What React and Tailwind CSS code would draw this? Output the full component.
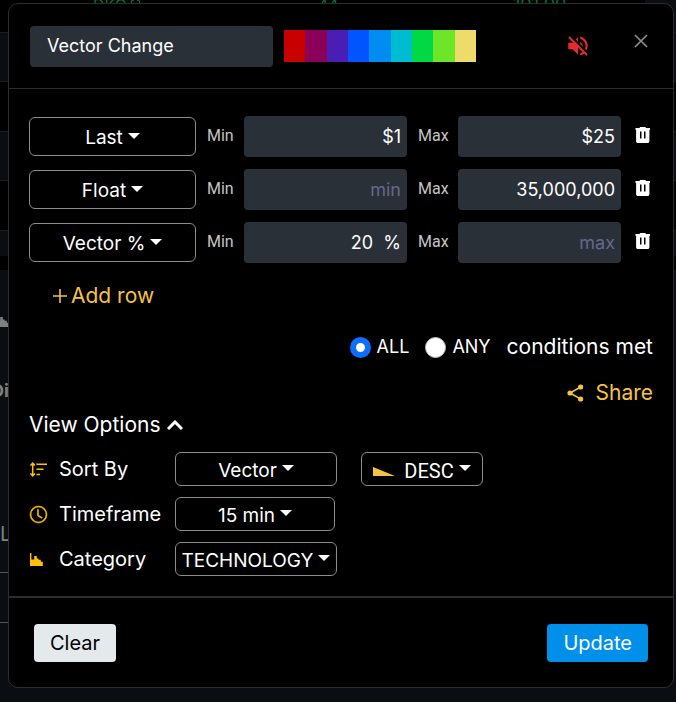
import React, { useState } from 'react';
import { BsClock } from 'react-icons/bs';
import { MdVolumeOff } from 'react-icons/md';

const swatches = [
    'bg-[#c80000]', 'bg-[#8b0058]', 'bg-[#4a1eb4]', 'bg-[#0055ff]', 'bg-[#008cf0]',
    'bg-[#00bcd0]', 'bg-[#00d943]', 'bg-[#6ee628]', 'bg-[#eedc6a]',
];

const initialRows = [
    { field: 'Last', min: '$1', max: '$25' },
    { field: 'Float', min: '', max: '35,000,000' },
    { field: 'Vector %', min: '20  %', max: '' },
];

const Caret = () => (
    <svg className="mb-[6px] h-[6px] w-[12px] shrink-0 pointer-events-none" viewBox="0 0 12 6" fill="currentColor">
        <path d="M0 0h12L6 6z" />
    </svg>
);

const TrashIcon = () => (
    <svg className="h-4 w-4" viewBox="0 0 16 16" fill="currentColor" fillRule="evenodd">
        <path d="M5.2 0h5.1l.8 1H15v2h-.6v11.2c0 1-.8 1.8-1.8 1.8H2.9c-1 0-1.8-.8-1.8-1.8V3H.5V1h3.9zM5 4.6v7h1.5v-7zm4 0v7h1.5v-7z" />
    </svg>
);

const ShareIcon = () => (
    <svg className="h-[18px] w-[17px]" viewBox="0 0 17 18" fill="currentColor">
        <path d="M13.6 3 3 9l10.6 6" fill="none" stroke="currentColor" strokeWidth="1.5" />
        <circle cx="13.6" cy="3" r="2.6" />
        <circle cx="3" cy="9" r="2.6" />
        <circle cx="13.6" cy="15" r="2.6" />
    </svg>
);

const SortIcon = () => (
    <svg className="h-[15px] w-[17px]" viewBox="0 0 17 15" fill="none" stroke="currentColor" strokeWidth="1.5">
        <path d="M2.7 2v11M.5 3.6l2.2-2.4 2.2 2.4M.5 11.4l2.2 2.4 2.2-2.4M6.5 2.2H17M6.5 7.3h7M6.5 12.4h3.6" />
    </svg>
);

const StepChartIcon = ({ className }) => (
    <svg className={className} viewBox="0 0 13 13" fill="currentColor">
        <path d="M0 0h1.4v6.6h2.8V3h2.6v2.4h1.8v1.4h2.2v2h2V13H0z" />
    </svg>
);

const Dropdown = ({ label, options, className, icon }) => (
    <label className={`flex items-center justify-center gap-[5px] rounded-md border border-[#8c8c8c] text-white ${className}`}>
        {icon}
        <select aria-label={label} className="appearance-none field-sizing-content bg-transparent outline-none">
            {options.map(o => <option key={o} className="bg-black">{o}</option>)}
        </select>
        <Caret />
    </label>
);

const ConditionRow = ({ row, index, onChange, onRemove }) => {
    const inputClass = 'h-[41px] w-full min-w-0 rounded bg-[#2a3038] px-[6px] text-right text-lg text-white outline-none placeholder:text-[#67678c]';
    const labelClass = 'pb-[2px] pl-[11px] font-[Roboto,sans-serif] text-base text-[#c4c4c4]';
    return (
        <div className="grid grid-cols-[167px_48px_1fr_51px_1fr_32px] items-center">
            <Dropdown
                label="Field"
                options={[row.field, ...['Last', 'Float', 'Vector %'].filter(f => f !== row.field)]}
                className="h-[39px] pt-1 text-[19px]"
            />
            <label htmlFor={`min-${index}`} className={labelClass}>Min</label>
            <input id={`min-${index}`} className={inputClass} placeholder="min" value={row.min} onChange={e => onChange(index, 'min', e.target.value)} />
            <label htmlFor={`max-${index}`} className={labelClass}>Max</label>
            <input id={`max-${index}`} className={inputClass} placeholder="max" value={row.max} onChange={e => onChange(index, 'max', e.target.value)} />
            <button type="button" aria-label="Remove row" className="flex justify-end pr-[2px] pb-[3px] text-white" onClick={() => onRemove(index)}>
                <TrashIcon />
            </button>
        </div>
    );
};

// Dimmed scanner table behind the dialog
const Backdrop = () => (
    <div className="absolute inset-0 overflow-hidden bg-[#0a0e13]" aria-hidden="true">
        <div className="mr-[31px] h-8 bg-black" />
        <div className="h-[50px] border-y border-[#1a1d20]" />
        <div className="h-[49px] bg-black" />
        <div className="h-[50px] border-y border-[#1a1d20]" />
        <div className="h-[49px] bg-black" />
        <div className="h-[26px] border-t border-[#1a1d20]" />
        <div className="h-[14px] bg-black" />
        <div className="absolute -top-[3px] left-[93px] flex gap-1 text-base leading-4 text-[#00702d]">
            DKG
            <svg className="mt-[3px] h-[10px] w-[9px]" viewBox="0 0 9 10" fill="none" stroke="currentColor">
                <path d="M3 .5H.5V10M6 .5h2.500V10" />
            </svg>
        </div>
        <div className="absolute -top-[3px] left-[318px] text-base leading-4 text-[#00702d]">44</div>
        <div className="absolute -top-[3px] left-[513px] text-lg leading-4 text-[#00702d]">101.00</div>
        <StepChartIcon className="absolute top-[314px] -left-[4px] h-[13px] w-[13px] text-[#808080]" />
        <div className="absolute top-[381px] -left-[9px] text-lg leading-5 font-bold text-[#808080]">Di</div>
        <div className="absolute top-[524px] left-0 text-xl leading-5 text-[#808080]">L</div>
        <div className="absolute top-[572px] left-0 h-[51px] w-4 border-y border-[#555]" />
    </div>
);

const App = () => {
    const [rows, setRows] = useState(initialRows);
    const [name, setName] = useState('Vector Change');
    const [open, setOpen] = useState(true);

    const changeRow = (i, key, value) => setRows(rows.map((r, n) => (n === i ? { ...r, [key]: value } : r)));
    const removeRow = (i) => setRows(rows.filter((_, n) => n !== i));
    const addRow = () => setRows([...rows, { field: 'Last', min: '', max: '' }]);

    return (
        <div className="relative min-h-screen pt-[3px] pr-[2px] pl-2 font-[Inter,sans-serif] text-white">
            <Backdrop />
            <div role="dialog" aria-label="Edit filter" className="relative rounded-[10px] border border-[#2d2d30] bg-black">
                <header className="flex items-start border-b border-[#2d2d30] px-[21px] pt-[22px] pb-[21px]">
                    <input
                        aria-label="Filter name"
                        className="h-[41px] w-[243px] rounded bg-[#2a3038] px-[17px] pb-[2px] text-lg text-white outline-none"
                        value={name}
                        onChange={e => setName(e.target.value)}
                    />
                    <div className="mt-1 ml-[11px] flex h-8 w-48">
                        {swatches.map(c => <div key={c} className={`flex-1 ${c}`} />)}
                    </div>
                    <button type="button" aria-label="Unmute alerts" className="mt-[7px] ml-auto text-[#e32b2b]">
                        <MdVolumeOff className="h-[26px] w-[26px]" />
                    </button>
                    <button type="button" aria-label="Close" className="mt-2 mr-1 ml-[43px] text-[#8c8c8c]">
                        <svg className="h-[14px] w-[14px]" viewBox="0 0 14 14" stroke="currentColor" strokeWidth="1.7">
                            <path d="M1 1l12 12M13 1L1 13" />
                        </svg>
                    </button>
                </header>

                <main className="px-5 pt-[27px] pb-5">
                    <div className="flex flex-col gap-3">
                        {rows.map((row, i) => (
                            <ConditionRow key={i} row={row} index={i} onChange={changeRow} onRemove={removeRow} />
                        ))}
                    </div>

                    <button type="button" onClick={addRow} className="mt-[18px] ml-6 flex h-[30px] items-center gap-1 text-[21px] text-[#f5c342]">
                        <svg className="h-[14px] w-[14px]" viewBox="0 0 14 14" stroke="currentColor" strokeWidth="1.6">
                            <path d="M7 0v14M0 7h14" />
                        </svg>
                        Add row
                    </button>

                    <div className="mt-[21px] flex h-[30px] items-center justify-end">
                        <label className="flex items-center gap-[6px] text-lg">
                            <input type="radio" name="match" defaultChecked className="h-[21px] w-[21px] appearance-none rounded-full bg-white checked:border-[6px] checked:border-[#0d6efd]" />
                            ALL
                        </label>
                        <label className="ml-4 flex items-center gap-[6px] text-lg">
                            <input type="radio" name="match" className="h-[21px] w-[21px] appearance-none rounded-full border border-[#bfbfbf] bg-white checked:border-[6px] checked:border-[#0d6efd]" />
                            ANY
                        </label>
                        <span className="ml-4 text-[21px]">conditions met</span>
                    </div>

                    <div className="mt-4 flex justify-end">
                        <button type="button" className="flex h-[30px] items-center gap-3 text-[21px] text-[#f5c342]">
                            <ShareIcon />
                            Share
                        </button>
                    </div>

                    <button type="button" onClick={() => setOpen(!open)} aria-expanded={open} className="mt-[2px] flex h-[30px] items-center gap-[6px] text-[21px]">
                        View Options
                        <svg className={`h-[10px] w-4 ${open ? '' : 'rotate-180'}`} viewBox="0 0 16 10" fill="none" stroke="currentColor" strokeWidth="3">
                            <path d="M1 9l7-7 7 7" />
                        </svg>
                    </button>

                    {open && (
                        <div className="mt-3 grid grid-cols-[30px_116px_auto] items-center justify-start gap-y-[11px] text-[19px]">
                            <span className="pl-px text-[#ffc107]"><SortIcon /></span>
                            <span className="text-xl">Sort By</span>
                            <div className="flex gap-6">
                                <Dropdown label="Sort By" options={['Vector', 'Last', 'Float']} className="h-[34px] w-[162px] pt-1" />
                                <Dropdown
                                    label="Direction"
                                    options={['DESC', 'ASC']}
                                    className="h-[34px] w-[122px] pt-1 font-[Roboto,sans-serif] text-xl"
                                    icon={
                                        <svg className="mr-1 h-[9px] w-[22px]" viewBox="0 0 22 9" fill="#f5c342">
                                            <path d="M0 0l22 9H0z" />
                                        </svg>
                                    }
                                />
                            </div>

                            <span className="pl-px text-[#ffc107]"><BsClock className="h-[17px] w-[17px]" stroke="currentColor" strokeWidth="0.5" overflow="visible" /></span>
                            <span className="text-xl">Timeframe</span>
                            <Dropdown label="Timeframe" options={['15 min', '5 min', '1 min']} className="h-[34px] w-[160px] pt-1" />

                            <span className="pl-px text-[#ffc107]"><StepChartIcon className="h-[13px] w-[13px]" /></span>
                            <span className="text-xl">Category</span>
                            <Dropdown label="Category" options={['TECHNOLOGY', 'ENERGY', 'FINANCE']} className="h-[34px] w-[162px] pt-1" />
                        </div>
                    )}
                </main>

                <footer className="flex justify-between border-t-2 border-[#2d2d30] px-[25px] pt-[26px] pb-[25px]">
                    <button type="button" className="h-[38px] rounded bg-[#e4e9ec] px-4 text-xl text-black">Clear</button>
                    <button type="button" className="h-[38px] rounded bg-[#0090e9] px-4 text-xl text-white">Update</button>
                </footer>
            </div>
        </div>
    );
};

export default App;
